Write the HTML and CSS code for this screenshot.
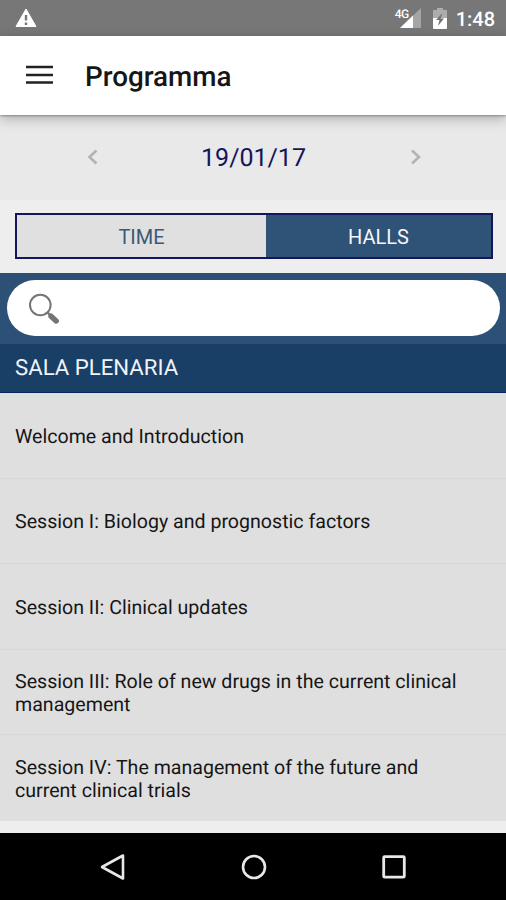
FILE: index.html
```html
<!DOCTYPE html>
<html lang="it">
<head>
  <meta charset="UTF-8" />
  <meta name="viewport" content="width=device-width, initial-scale=1.0" />
  <title>Programma</title>
  <link rel="stylesheet" href="styles.css">
</head>
<body>
  <!-- Status bar -->
  <div class="status-bar">
    <svg class="icon-warning" width="22" height="20" viewBox="0 0 22 20">
      <path d="M11 1 L21 18.5 H1 Z" fill="#fff" stroke="#fff" stroke-linejoin="round" />
      <path d="M11 7 V12.5 M11 14.5 V17" stroke="#777" stroke-width="2.4" />
    </svg>
    <div class="status-right">
      <span class="network">4G</span>
      <svg class="icon-signal" width="21" height="20" viewBox="0 0 21 20">
        <path d="M21 0 V20 H0 Z" fill="#a5a5a5" />
        <path d="M13 7.6 V20 H0 Z" fill="#fff" />
      </svg>
      <svg class="icon-battery" width="14" height="21" viewBox="0 0 14 21">
        <path d="M4 0 H10 V2 H14 V11 H0 V2 H4 Z" fill="#adadad" />
        <path d="M0 10 H14 V20 Q14 21 13 21 H1 Q0 21 0 20 Z" fill="#fff" />
        <path d="M9.5 5 L3 12 H6.5 L5 18 L11 10.5 H7.5 Z" fill="#707070" />
      </svg>
      <span class="clock">1:48</span>
    </div>
  </div>

  <header class="app-header">
    <button class="menu-button" aria-label="Menu">
      <svg width="27" height="20" viewBox="0 0 27 20">
        <path d="M0 2 H27 M0 10 H27 M0 17.5 H27" stroke="#222" stroke-width="2.3" />
      </svg>
    </button>
    <h1>Programma</h1>
  </header>

  <main>
    <div class="date-bar">
      <button class="date-arrow" aria-label="Previous day">
        <svg width="12" height="16" viewBox="0 0 12 16">
          <path d="M9.5 1.5 L2.5 8 L9.5 14.5" fill="none" stroke="#b3b3b3" stroke-width="2.6" />
        </svg>
      </button>
      <span class="date">19/01/17</span>
      <button class="date-arrow" aria-label="Next day">
        <svg width="12" height="16" viewBox="0 0 12 16">
          <path d="M2 1.5 L9 8 L2 14.5" fill="none" stroke="#b3b3b3" stroke-width="2.6" />
        </svg>
      </button>
    </div>

    <div class="tabs-wrap">
      <div class="tabs">
        <button class="tab">TIME</button>
        <button class="tab active">HALLS</button>
      </div>
    </div>

    <div class="search-bar">
      <label class="search-box">
        <svg width="32" height="32" viewBox="0 0 32 32">
          <circle cx="12.3" cy="12" r="10.3" fill="none" stroke="#757575" stroke-width="2" />
          <path d="M19 19 L23 23" stroke="#757575" stroke-width="2.4" />
          <path d="M23 23.2 L28.2 28" stroke="#757575" stroke-width="5.4" stroke-linecap="round" />
        </svg>
        <input type="text" aria-label="Search" />
      </label>
    </div>

    <h2 class="hall-title">SALA PLENARIA</h2>
    <ul class="session-list">
      <li>Welcome and Introduction</li>
      <li>Session I: Biology and prognostic factors</li>
      <li>Session II: Clinical updates</li>
      <li>Session III: Role of new drugs in the current clinical management</li>
      <li>Session IV: The management of the future and current clinical trials</li>
    </ul>
  </main>

  <!-- Android navigation -->
  <nav class="nav-bar">
    <svg width="28" height="30" viewBox="0 0 28 30">
      <path d="M3 15 L24 3.5 V26.5 Z" fill="none" stroke="#e8e8e8" stroke-width="2.6" stroke-linejoin="round" />
    </svg>
    <svg width="28" height="30" viewBox="0 0 28 30">
      <circle cx="14" cy="15" r="11" fill="none" stroke="#e8e8e8" stroke-width="2.6" />
    </svg>
    <svg width="28" height="30" viewBox="0 0 28 30">
      <rect x="3.7" y="4.6" width="20.6" height="20.6" rx="1" fill="none" stroke="#e8e8e8" stroke-width="2.8" />
    </svg>
  </nav>
</body>
</html>
```
FILE: styles.css
```css
* {
  box-sizing: border-box;
}
body {
  font-family: Roboto, Arial, sans-serif;
  margin: 0;
  height: 900px;
  display: flex;
  flex-direction: column;
  overflow: hidden;
  background-color: #eee;
  color: #161616;
  text-rendering: geometricPrecision;
}
button {
  font-family: inherit;
  margin: 0;
  padding: 0;
  border: 0;
  background: none;
}
svg {
  display: block;
  flex: none;
}
.status-bar {
  height: 36px;
  flex: none;
  background-color: #777;
  color: #fff;
  display: flex;
  justify-content: space-between;
  padding: 8px 11px 0 15px;
}
.status-right {
  display: flex;
  align-items: flex-start;
}
.network {
  font-size: 12px;
  line-height: 12px;
  font-weight: 500;
  letter-spacing: -0.5px;
  margin-right: -9px;
}
.icon-battery {
  margin-left: 12px;
}
.clock {
  font-size: 20px;
  line-height: 22px;
  font-weight: 500;
  margin-left: 9px;
}
.app-header {
  height: 79px;
  flex: none;
  position: relative;
  display: flex;
  align-items: center;
  padding-left: 26px;
  background-color: #fff;
  box-shadow: 0 1px 2px rgba(0, 0, 0, 0.3), 0 4px 12px rgba(0, 0, 0, 0.25);
}
.menu-button {
  margin-bottom: 2px;
}
.app-header h1 {
  margin: 2px 0 0 32px;
  font-size: 27.8px;
  line-height: 32px;
  font-weight: 500;
}
.date-bar {
  height: 85px;
  display: flex;
  align-items: center;
  justify-content: space-between;
  padding: 0 84px 1px 87px;
  background-color: #e9e9e9;
}
.date {
  padding: 2px 2px 0 0;
  font-size: 25px;
  color: #15155c;
}
.tabs-wrap {
  height: 73px;
  padding: 13px 13px 14px 15px;
}
.tabs {
  height: 46px;
  display: grid;
  grid-template-columns: 249px 1fr;
  border: 2px solid #15155c;
}
.tab {
  padding-top: 2px;
  font-size: 20px;
  background-color: #e0e0e0;
  color: #3c5875;
}
.tab.active {
  background-color: #2f5277;
  color: #f3f6fa;
}
.search-bar {
  height: 71px;
  padding: 7px 6px 8px 7px;
  background-color: #2c5076;
}
.search-box {
  height: 56px;
  display: flex;
  align-items: center;
  padding: 1px 0 0 21px;
  border-radius: 28px;
  background-color: #fff;
}
.search-box input {
  flex: 1;
  min-width: 0;
  margin: 0 24px 0 12px;
  border: 0;
  outline: 0;
  font-size: 20px;
}
.hall-title {
  height: 49px;
  margin: 0;
  padding: 0 15px 1px;
  display: flex;
  align-items: center;
  background-color: #193f66;
  border-bottom: 1px solid #0a2260;
  color: #f0f3f7;
  font-size: 22.2px;
  font-weight: 400;
}
.session-list {
  list-style: none;
  margin: 0;
  padding: 0;
  background-color: #dfdfdf;
}
.session-list li {
  height: 85.6px;
  display: flex;
  align-items: center;
  padding: 2px 30px 0 15px;
  font-size: 19.6px;
  line-height: 23px;
  border-bottom: 1px solid #d6d6d6;
}
.session-list li:last-child {
  border-bottom: 0;
}
.nav-bar {
  height: 67px;
  flex: none;
  margin-top: auto;
  display: flex;
  justify-content: space-between;
  align-items: center;
  padding: 0 98px 0 99px;
  background-color: #000;
}
```
